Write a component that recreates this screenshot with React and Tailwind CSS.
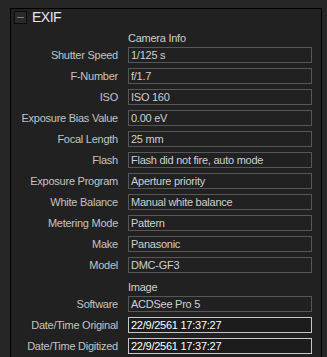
import React from 'react';

const camera = [
  ['Shutter Speed', '1/125 s'],
  ['F-Number', 'f/1.7'],
  ['ISO', 'ISO 160'],
  ['Exposure Bias Value', '0.00 eV'],
  ['Focal Length', '25 mm'],
  ['Flash', 'Flash did not fire, auto mode'],
  ['Exposure Program', 'Aperture priority'],
  ['White Balance', 'Manual white balance'],
  ['Metering Mode', 'Pattern'],
  ['Make', 'Panasonic'],
  ['Model', 'DMC-GF3'],
];

const image = [
  ['Software', 'ACDSee Pro 5', false],
  ['Date/Time Original', '22/9/2561 17:37:27', true],
  ['Date/Time Digitized', '22/9/2561 17:37:27', true],
];

const Row = ({ label, value, editable }) => (
  <div className="flex items-start mb-[5px] tracking-[-0.25px]">
    <div className="w-[107px] text-right h-[16px] leading-[16px] text-[#c4c4c4] whitespace-nowrap">{label}</div>
    <div
      className={
        editable
          ? 'ml-[10px] w-[184px] h-[16px] border border-[#c8c8c8] bg-[#1c1c1c] text-white leading-[14px] pl-[2px] whitespace-nowrap overflow-hidden'
          : 'ml-[10px] w-[184px] h-[16px] border border-[#575757] text-[#d0d0d0] leading-[14px] pl-[2px] whitespace-nowrap overflow-hidden'
      }
    >
      {value}
    </div>
  </div>
);

const Section = ({ title }) => (
  <div className="h-[18px] flex items-center pl-[117px] text-[#cfcfcf] tracking-[-0.25px]">{title}</div>
);

export default function App() {
  return (
    <div
      className="w-[327px] h-[357px] bg-[#262626] pt-[8px] pl-[10px] pr-[5px] overflow-hidden text-[11px]"
      style={{ fontFamily: '"Liberation Sans", Arial, sans-serif' }}
    >
      <div className="h-full border-l border-t border-r border-black bg-[#212121]">
        {/* header */}
        <div className="flex items-center pl-[3px] pt-[1px] mb-[5px]">
          <div className="w-[13px] h-[13px] border border-[#0c0c0c] bg-[#2a2a2a] flex items-center justify-center">
            <div className="w-[7px] h-px bg-[#7a7a7a]"></div>
          </div>
          <span className="ml-[5px] text-[14px] leading-[14px] tracking-[-0.5px] text-[#e6e6e6]">EXIF</span>
        </div>

        <Section title="Camera Info" />
        {camera.map(([l, v]) => (
          <Row key={l} label={l} value={v} />
        ))}

        <Section title="Image" />
        {image.map(([l, v, e]) => (
          <Row key={l} label={l} value={v} editable={e} />
        ))}
      </div>
    </div>
  );
}
